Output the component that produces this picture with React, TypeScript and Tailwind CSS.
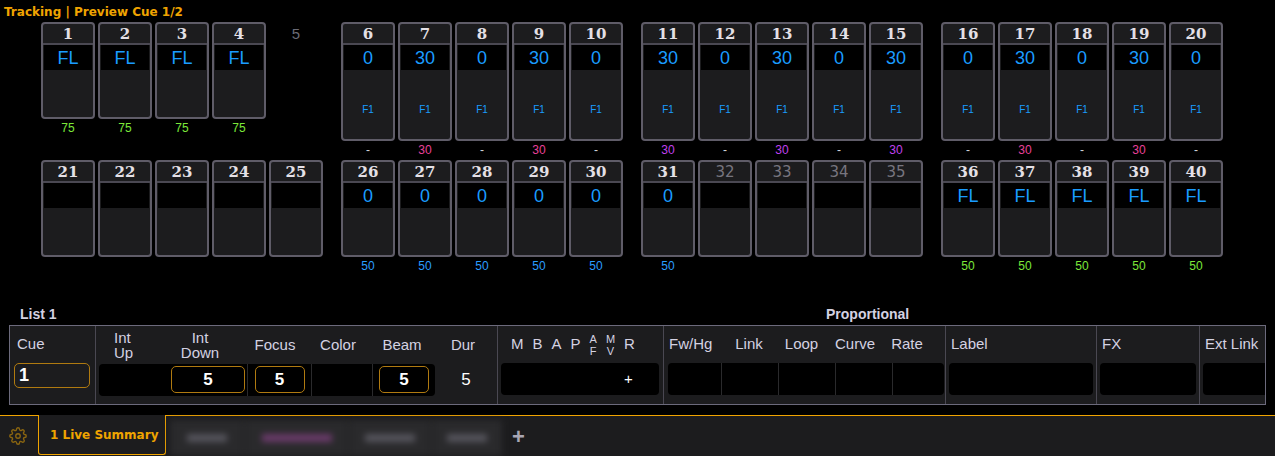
import React from 'react';

type Ch = { n: number; v?: string; f1?: boolean; below?: string; belowColor?: string; dim?: boolean; none?: boolean };

const row1: Ch[][] = [
  [1, 2, 3, 4].map((n) => ({ n, v: 'FL', below: '75', belowColor: 'text-[#7ce83a]' })).concat([{ n: 5, none: true }]),
  [6, 7, 8, 9, 10].map((n, i) => ({ n, v: i % 2 ? '30' : '0', f1: true, below: i % 2 ? '30' : '-', belowColor: i % 2 ? 'text-[#e8409a]' : 'text-gray-300' })),
  [11, 12, 13, 14, 15].map((n, i) => ({ n, v: i % 2 ? '0' : '30', f1: true, below: i % 2 ? '-' : '30', belowColor: i % 2 ? 'text-gray-300' : 'text-[#c040f0]' })),
  [16, 17, 18, 19, 20].map((n, i) => ({ n, v: i % 2 ? '30' : '0', f1: true, below: i % 2 ? '30' : '-', belowColor: i % 2 ? 'text-[#e8409a]' : 'text-gray-300' })),
];

const row2: Ch[][] = [
  [21, 22, 23, 24, 25].map((n) => ({ n })),
  [26, 27, 28, 29, 30].map((n) => ({ n, v: '0', below: '50', belowColor: 'text-[#2a9dff]' })),
  [{ n: 31, v: '0', below: '50', belowColor: 'text-[#2a9dff]' } as Ch].concat([32, 33, 34, 35].map((n) => ({ n, dim: true }))),
  [36, 37, 38, 39, 40].map((n) => ({ n, v: 'FL', below: '50', belowColor: 'text-[#7ce83a]' })),
];

function Tile({ c, tall }: { c: Ch; tall: boolean }) {
  if (c.none) {
    return <div className="w-[54px] text-center text-[15px] text-[#6b6b75] pt-[1px]">{c.n}</div>;
  }
  return (
    <div className="w-[54px] flex flex-col items-center">
      <div className={`w-[54px] ${tall ? 'h-[119px]' : 'h-[97px]'} border-2 border-[#5f5c68] rounded-[4px] bg-[#1c1c1e] flex flex-col overflow-hidden`}>
        <div className={`h-[21px] border-b-2 border-[#4a4852] text-center text-[15px] leading-[21px] ${c.dim ? 'text-[#77757f] font-normal' : 'text-[#e4e0e6] font-bold'}`} style={{ fontFamily: c.dim ? 'Verdana, "DejaVu Sans", sans-serif' : '"DejaVu Serif", serif' }}>
          {c.n}
        </div>
        <div className="mx-[1px] h-[25px] bg-black text-center text-[18px] leading-[26px] text-[#1a9cff]">{c.v}</div>
        <div className="flex-1 flex items-end justify-center pb-[22px] text-[10px] text-[#1a9cff]">{c.f1 ? 'F1' : ''}</div>
      </div>
      <div className={`h-[19px] text-[12px] leading-[19px] ${c.belowColor ?? ''}`}>{c.below}</div>
    </div>
  );
}

function Row({ groups, tallIdx }: { groups: Ch[][]; tallIdx: (g: number) => boolean }) {
  return (
    <div className="flex gap-[18px] pl-[41px]">
      {groups.map((g, gi) => (
        <div key={gi} className="flex gap-[3px]">
          {g.map((c) => <Tile key={c.n} c={c} tall={tallIdx(gi)} />)}
        </div>
      ))}
    </div>
  );
}

const Box = ({ w, children }: { w: string; children?: React.ReactNode }) => (
  <div className={`${w} h-[27px] border border-[#b07a10] rounded-[5px] text-white font-bold text-[17px] flex items-center justify-center`}>{children}</div>
);

export default function App() {
  const hd = 'text-[15px] text-[#d4d2e2]';
  return (
    <div className="w-[1275px] h-[456px] bg-black overflow-hidden relative" style={{ fontFamily: '"Liberation Sans Narrow", "Liberation Sans", Arial, sans-serif' }}>
      <div className="pl-[4px] pt-[3px] h-[22px] text-[12px] font-bold text-[#f0a400]" style={{ fontFamily: 'Verdana, "DejaVu Sans", sans-serif' }}>Tracking | Preview Cue 1/2</div>
      <Row groups={row1} tallIdx={(g) => g > 0} />
      <Row groups={row2} tallIdx={() => false} />
      <div className="absolute left-0 top-[306px] w-full">
        <div className="flex h-[19px] items-end">
          <div className="pl-[20px] w-[700px] text-[14px] font-bold text-[#d4d2e2]">List 1</div>
          <div className="pl-[126px] text-[14px] font-bold text-[#d4d2e2]">Proportional</div>
        </div>
        <div className="ml-[9px] w-[1257px] h-[80px] border border-[#6c6a7c] bg-[#1c1c1e] flex">
          <div className="w-[86px] border-r border-[#4a4852] flex flex-col">
            <div className={`h-[37px] pl-[7px] flex items-center ${hd}`}>Cue</div>
            <div className="pl-[4px]"><div className="w-[76px] h-[25px] border border-[#b07a10] rounded-[5px] text-white font-bold text-[18px] pl-[4px] leading-[23px]">1</div></div>
          </div>
          <div className="w-[402px] border-r border-[#4a4852] flex flex-col">
            <div className={`h-[37px] flex items-center leading-[15px] ${hd}`}>
              <div className="w-[60px] pl-[18px]">Int<br />Up</div>
              <div className="w-[88px] text-center">Int<br />Down</div>
              <div className="w-[62px] text-center">Focus</div>
              <div className="w-[64px] text-center">Color</div>
              <div className="w-[64px] text-center">Beam</div>
              <div className="w-[58px] text-center">Dur</div>
            </div>
            <div className="flex h-[33px] items-center">
              <div className="ml-[3px] w-[336px] h-[32px] bg-black rounded-[4px] flex items-center">
                <div className="w-[148px] flex justify-end pr-[2px]"><Box w="w-[74px]">5</Box></div>
                <div className="w-[64px] h-full border-l border-[#2a2a2c] flex items-center justify-center"><Box w="w-[50px]">5</Box></div>
                <div className="w-[62px] h-full border-l border-[#2a2a2c] border-r" />
                <div className="flex-1 flex items-center justify-center"><Box w="w-[50px]">5</Box></div>
              </div>
              <div className="flex-1 text-center text-white text-[17px]">5</div>
            </div>
          </div>
          <div className="w-[166px] border-r border-[#4a4852] flex flex-col">
            <div className={`h-[37px] flex items-center gap-[9px] pl-[13px] ${hd}`}>
              <span>M</span><span>B</span><span>A</span><span>P</span>
              <span className="text-[11px] leading-[12px] text-center">A<br />F</span>
              <span className="text-[11px] leading-[12px] text-center">M<br />V</span>
              <span>R</span>
            </div>
            <div className="ml-[3px] w-[158px] h-[32px] bg-black rounded-[4px] flex items-center pl-[123px] text-white text-[15px]">+</div>
          </div>
          <div className="w-[282px] border-r border-[#4a4852] flex flex-col">
            <div className={`h-[37px] flex items-center ${hd}`}>
              <div className="w-[60px] pl-[5px]">Fw/Hg</div>
              <div className="w-[50px] text-center">Link</div>
              <div className="w-[55px] text-center">Loop</div>
              <div className="w-[52px] text-center">Curve</div>
              <div className="w-[52px] text-center">Rate</div>
            </div>
            <div className="ml-[4px] w-[276px] h-[32px] bg-black rounded-[4px] flex">
              <div className="w-[54px] border-r border-[#2a2a2c]" />
              <div className="w-[57px] border-r border-[#2a2a2c]" />
              <div className="w-[57px] border-r border-[#2a2a2c]" />
              <div className="w-[57px] border-r border-[#2a2a2c]" />
            </div>
          </div>
          <div className="w-[151px] border-r border-[#4a4852] flex flex-col">
            <div className={`h-[37px] flex items-center pl-[5px] ${hd}`}>Label</div>
            <div className="ml-[3px] w-[144px] h-[32px] bg-black rounded-[4px]" />
          </div>
          <div className="w-[103px] border-r border-[#4a4852] flex flex-col">
            <div className={`h-[37px] flex items-center pl-[5px] ${hd}`}>FX</div>
            <div className="ml-[3px] w-[96px] h-[32px] bg-black rounded-[4px]" />
          </div>
          <div className="flex-1 flex flex-col">
            <div className={`h-[37px] flex items-center pl-[5px] ${hd}`}>Ext Link</div>
            <div className="ml-[3px] flex-1 mb-[9px] bg-black rounded-l-[4px]" />
          </div>
        </div>
      </div>
      <div className="absolute left-0 top-[415px] w-full h-[41px] bg-[#1c1c1e] border-t border-[#f0a400] flex items-end">
        <div className="w-[36px] h-full flex items-center justify-center text-[#8a6510]">
          <svg width="18" height="18" viewBox="0 0 24 24" fill="none" stroke="currentColor" strokeWidth="1.8">
            <circle cx="12" cy="12" r="3" />
            <path d="M19.4 15a1.65 1.65 0 0 0 .33 1.82l.06.06a2 2 0 1 1-2.830 2.83l-.06-.06a1.65 1.65 0 0 0-1.82-.33 1.65 1.65 0 0 0-1 1.51V21a2 2 0 1 1-4 0v-.09A1.65 1.65 0 0 0 9 19.4a1.65 1.65 0 0 0-1.82.33l-.06.06a2 2 0 1 1-2.83-2.83l.06-.06A1.65 1.65 0 0 0 4.68 15a1.65 1.65 0 0 0-1.51-1H3a2 2 0 1 1 0-4h.09A1.65 1.65 0 0 0 4.6 9a1.65 1.65 0 0 0-.33-1.82l-.06-.06a2 2 0 1 1 2.83-2.83l.06.06A1.65 1.65 0 0 0 9 4.68 1.65 1.65 0 0 0 10 3.17V3a2 2 0 1 1 4 0v.09a1.65 1.65 0 0 0 1 1.51 1.65 1.65 0 0 0 1.82-.33l.06-.06a2 2 0 1 1 2.83 2.83l-.06.06A1.65 1.65 0 0 0 19.4 9a1.65 1.65 0 0 0 1.51 1H21a2 2 0 1 1 0 4h-.09a1.65 1.65 0 0 0-1.51 1z" />
          </svg>
        </div>
        <div className="ml-[2px] w-[128px] h-[40px] -mt-[1px] border-x border-b border-[#f0a400] rounded-b-[3px] bg-[#1c1c1e] flex items-center pl-[11px] text-[12px] font-bold text-[#f0a400] self-start" style={{ fontFamily: 'Verdana, "DejaVu Sans", sans-serif' }}>1 Live Summary</div>
        <div className="h-[36px] self-end flex gap-[1px] ml-[4px] blur-[3px]">
          <div className="w-[74px] bg-[#2a2a2c] flex items-center justify-center"><div className="w-[40px] h-[8px] bg-[#55545c]" /></div>
          <div className="w-[103px] bg-[#2a2a2c] flex items-center justify-center"><div className="w-[70px] h-[8px] bg-[#6a3a6a]" /></div>
          <div className="w-[82px] bg-[#2a2a2c] flex items-center justify-center"><div className="w-[50px] h-[8px] bg-[#55545c]" /></div>
          <div className="w-[70px] bg-[#2a2a2c] flex items-center justify-center"><div className="w-[40px] h-[8px] bg-[#55545c]" /></div>
        </div>
        <div className="h-full flex items-center pl-[10px] text-[22px] text-[#a8a6b4] font-bold">+</div>
      </div>
    </div>
  );
}
